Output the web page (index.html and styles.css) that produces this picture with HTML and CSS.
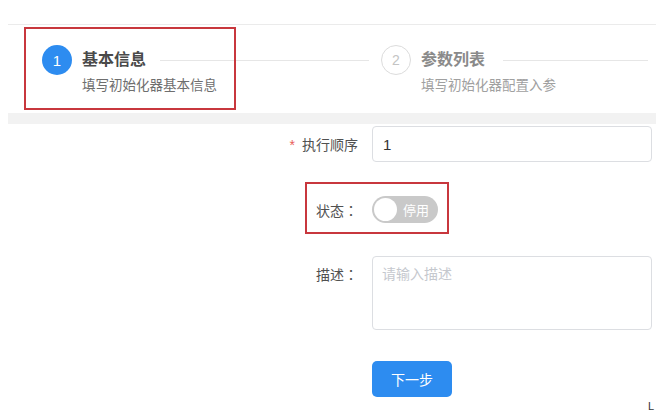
FILE: index.html
```html
<!DOCTYPE html>
<html lang="zh-CN">
<head>
<meta charset="utf-8">
<title>初始化器</title>
<link rel="stylesheet" href="styles.css">
</head>
<body>
<div class="page">
  <div class="steps">
    <div class="step step-active">
      <div class="step-icon">1</div>
      <div class="step-body">
        <div class="step-head"><span class="step-title">基本信息</span><span class="step-line"></span></div>
        <div class="step-desc">填写初始化器基本信息</div>
      </div>
      <div class="mark mark-step"></div>
    </div>
    <div class="step step-wait">
      <div class="step-icon">2</div>
      <div class="step-body">
        <div class="step-head"><span class="step-title">参数列表</span><span class="step-line"></span></div>
        <div class="step-desc">填写初始化器配置入参</div>
      </div>
    </div>
  </div>
  <div class="band"></div>
  <form class="form">
    <div class="row row-order">
      <label class="label"><span class="req">*</span>执行顺序</label>
      <div class="control"><div class="input">1</div></div>
    </div>
    <div class="row row-status">
      <label class="label">状态<span class="colon" lang="zh-Hant">：</span></label>
      <div class="control">
        <span class="switch"><span class="knob"></span><span class="switch-text">停用</span></span>
      </div>
      <div class="mark mark-status"></div>
    </div>
    <div class="row row-desc">
      <label class="label">描述<span class="colon" lang="zh-Hant">：</span></label>
      <div class="control"><div class="textarea">请输入描述</div></div>
    </div>
    <div class="row row-btn">
      <span class="label"></span>
      <div class="control"><button type="button" class="btn">下一步</button></div>
    </div>
  </form>
  <span class="cursor">L</span>
</div>
</body>
</html>
```

FILE: styles.css
```css
html, body {
  margin: 0;
  padding: 0;
  background: #fff;
}
body {
  font-family: "Noto Sans CJK SC", "Liberation Sans", sans-serif;
  font-size: 14px;
  color: #515a6e;
  overflow: hidden;
}
.page {
  position: relative;
  width: 656px;
  height: 414px;
  overflow: hidden;
  padding-top: 24px;
  box-sizing: border-box;
}
.steps {
  margin-left: 8px;
  border-top: 1px solid #ebebeb;
  height: 88px;
  display: flex;
  padding-left: 34px;
  box-sizing: border-box;
}
.step {
  position: relative;
  display: flex;
  align-items: flex-start;
  padding-top: 20px;
}
.step-active { width: 339px; }
.step-wait { flex: 1; }
.step-icon {
  width: 30px;
  height: 30px;
  border-radius: 50%;
  box-sizing: border-box;
  display: flex;
  align-items: center;
  justify-content: center;
  font-family: "Liberation Sans", sans-serif;
  font-size: 15px;
  flex: none;
}
.step-active .step-icon {
  background: #2d8cf0;
  color: #fff;
}
.step-wait .step-icon {
  border: 1.5px solid #dcdcdc;
  color: #c4c4c4;
  font-size: 14px;
}
.step-body {
  flex: 1;
  margin-left: 10px;
}
.step-head {
  display: flex;
  align-items: center;
  height: 26px;
}
.step-title {
  font-size: 16px;
  font-weight: bold;
  color: #4a4a4a;
  padding-right: 14px;
}
.step-wait .step-title {
  color: #8a8a8a;
  padding-right: 18px;
}
.step-line {
  flex: 1;
  height: 1px;
  background: #e6e6e6;
  margin-right: 12px;
  margin-top: 4px;
}
.step-wait .step-line { margin-right: 8px; }
.step-desc {
  margin-top: 3px;
  font-size: 13.5px;
  line-height: 20px;
  color: #6e6e6e;
}
.step-wait .step-desc { color: #a0a0a0; }
.mark {
  position: absolute;
  border: 2px solid #c8373d;
  box-sizing: border-box;
  pointer-events: none;
}
.mark-step {
  left: -18px;
  top: 2px;
  width: 212px;
  height: 83px;
}
.band {
  margin-left: 8px;
  height: 11px;
  background: #f2f2f2;
  margin-top: 1px;
}
.form {
  margin: 0;
  padding-top: 2px;
}
.row {
  position: relative;
  display: grid;
  grid-template-columns: 358px 1fr;
  column-gap: 14px;
  align-items: center;
}
.label {
  text-align: right;
  color: #505050;
  font-size: 14px;
  line-height: 20px;
}
.colon {
  font-family: "Noto Sans CJK TC", sans-serif;
}
.req {
  color: #e8605a;
  font-family: "Liberation Sans", sans-serif;
  margin-right: 7px;
}
.control { min-width: 0; }
.input {
  width: 280px;
  height: 36px;
  border: 1px solid #dcdee2;
  border-radius: 4px;
  box-sizing: border-box;
  padding-left: 10px;
  display: flex;
  align-items: center;
  font-family: "Liberation Sans", sans-serif;
  font-size: 15px;
  color: #333;
}
.row-status {
  margin-top: 34px;
  height: 27px;
}
.switch {
  display: inline-flex;
  align-items: center;
  width: 66px;
  height: 27px;
  border-radius: 14px;
  background: #c9c9c9;
  box-sizing: border-box;
  padding-left: 2px;
  vertical-align: middle;
}
.knob {
  width: 23px;
  height: 23px;
  border-radius: 50%;
  background: #fff;
  flex: none;
}
.switch-text {
  margin-left: 6px;
  color: #fff;
  font-size: 13px;
  line-height: 27px;
}
.mark-status {
  left: 305px;
  top: -14px;
  width: 144px;
  height: 52px;
}
.row-desc {
  margin-top: 33px;
  align-items: start;
}
.row-desc .label { padding-top: 8px; }
.textarea {
  width: 280px;
  height: 74px;
  border: 1px solid #dcdee2;
  border-radius: 4px;
  box-sizing: border-box;
  padding: 5px 9px;
  color: #c5c8ce;
  font-size: 14px;
  line-height: 22px;
}
.row-btn { margin-top: 31px; }
.btn {
  width: 80px;
  height: 36px;
  border: none;
  border-radius: 5px;
  background: #2d8cf0;
  color: #fff;
  font-family: "Noto Sans CJK SC", sans-serif;
  font-size: 14px;
  padding: 0;
}
.cursor {
  position: absolute;
  right: 2px;
  bottom: 2px;
  font-family: "Liberation Sans", sans-serif;
  font-size: 11px;
  color: #333;
}
```
